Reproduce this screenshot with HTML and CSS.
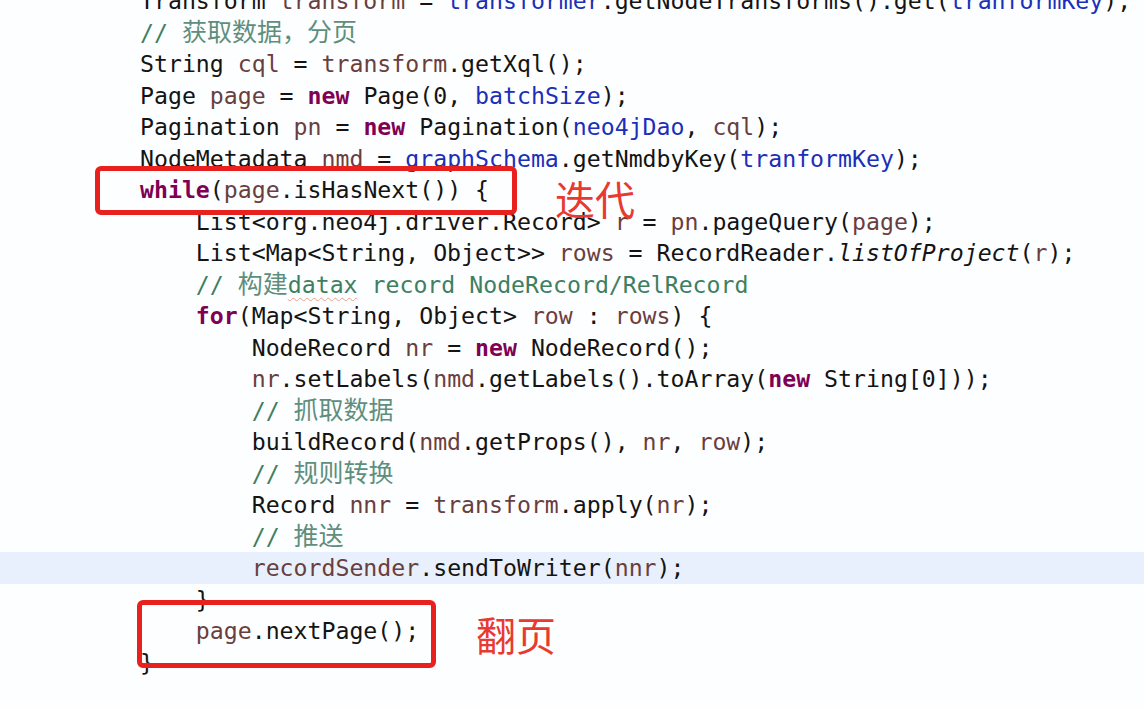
FILE: index.html
```html
<!DOCTYPE html>
<html lang="zh-CN">
<head>
<meta charset="utf-8">
<title>Code</title>
<link rel="stylesheet" href="styles.css">
</head>
<body>
<div class="page">
  <div class="code">
    <div class="line">Transform <span class="v">transform</span> = <span class="f">transformer</span>.getNodeTransforms().get(<span class="f">tranformKey</span>);</div>
    <div class="line c">// <span class="cjk">获取数据，分页</span></div>
    <div class="line">String <span class="v">cql</span> = <span class="v">transform</span>.getXql();</div>
    <div class="line">Page <span class="v">page</span> = <span class="k">new</span> Page(0, <span class="f">batchSize</span>);</div>
    <div class="line">Pagination <span class="v">pn</span> = <span class="k">new</span> Pagination(<span class="f">neo4jDao</span>, <span class="v">cql</span>);</div>
    <div class="line">NodeMetadata <span class="v">nmd</span> = <span class="f">graphSchema</span>.getNmdbyKey(<span class="f">tranformKey</span>);</div>
    <div class="line"><span class="k">while</span>(<span class="v">page</span>.isHasNext()) {</div>
    <div class="line">    List&lt;org.neo4j.driver.Record&gt; <span class="v">r</span> = <span class="v">pn</span>.pageQuery(<span class="v">page</span>);</div>
    <div class="line">    List&lt;Map&lt;String, Object&gt;&gt; <span class="v">rows</span> = RecordReader.<span class="i">listOfProject</span>(<span class="v">r</span>);</div>
    <div class="line c">    // <span class="cjk">构建</span><span class="sq">datax</span> record NodeRecord/RelRecord</div>
    <div class="line">    <span class="k">for</span>(Map&lt;String, Object&gt; <span class="v">row</span> : <span class="v">rows</span>) {</div>
    <div class="line">        NodeRecord <span class="v">nr</span> = <span class="k">new</span> NodeRecord();</div>
    <div class="line">        <span class="v">nr</span>.setLabels(<span class="v">nmd</span>.getLabels().toArray(<span class="k">new</span> String[0]));</div>
    <div class="line c">        // <span class="cjk">抓取数据</span></div>
    <div class="line">        buildRecord(<span class="v">nmd</span>.getProps(), <span class="v">nr</span>, <span class="v">row</span>);</div>
    <div class="line c">        // <span class="cjk">规则转换</span></div>
    <div class="line">        Record <span class="v">nnr</span> = <span class="v">transform</span>.apply(<span class="v">nr</span>);</div>
    <div class="line c">        // <span class="cjk">推送</span></div>
    <div class="line current">        <span class="v">recordSender</span>.sendToWriter(<span class="v">nnr</span>);</div>
    <div class="line">    }</div>
    <div class="line">    <span class="v">page</span>.nextPage();</div>
    <div class="line">}</div>
  </div>

  <div class="mark mark-loop"></div>
  <div class="label label-loop">迭代</div>
  <div class="mark mark-next"></div>
  <div class="label label-next">翻页</div>
</div>
</body>
</html>
```

FILE: styles.css
```css
html, body {
  margin: 0;
  padding: 0;
  background: #ffffff;
}

.page {
  position: relative;
  width: 1144px;
  height: 708px;
  overflow: hidden;
  background: #fdfeff;
}

.code {
  margin-top: -15px;
  display: flex;
  flex-direction: column;
  font-family: "DejaVu Sans Mono", "Liberation Mono", "Noto Sans CJK SC", monospace;
  font-size: 23.2px;
  color: #141414;
}

.line {
  height: 31.5px;
  line-height: 31.5px;
  padding-left: 140px;
  white-space: pre;
}

.line.current {
  background: #e7f0fc;
}

.v { color: #6a3e3e; }
.f { color: #1b2fb8; }
.k { color: #7f0055; font-weight: bold; }
.i { font-style: italic; }
.c { color: #3f7f5f; }

.cjk {
  font-family: "Noto Sans CJK SC", sans-serif;
  font-size: 25px;
  line-height: 1;
  color: #5f8f7c;
}

.sq {
  text-decoration: underline wavy #e9a08a;
  text-decoration-thickness: 1px;
  text-underline-offset: 4px;
}

.mark {
  position: absolute;
  border: 5px solid #e8211f;
  border-radius: 6px;
  box-sizing: border-box;
}

.mark-loop {
  left: 95px;
  top: 166px;
  width: 422px;
  height: 49px;
}

.mark-next {
  left: 137px;
  top: 600px;
  width: 299px;
  height: 68px;
}

.label {
  position: absolute;
  font-family: "Noto Sans CJK SC", sans-serif;
  font-size: 40px;
  line-height: 1;
  color: #e83a30;
}

.label-loop {
  left: 555px;
  top: 178px;
}

.label-next {
  left: 476px;
  top: 614px;
}
```
